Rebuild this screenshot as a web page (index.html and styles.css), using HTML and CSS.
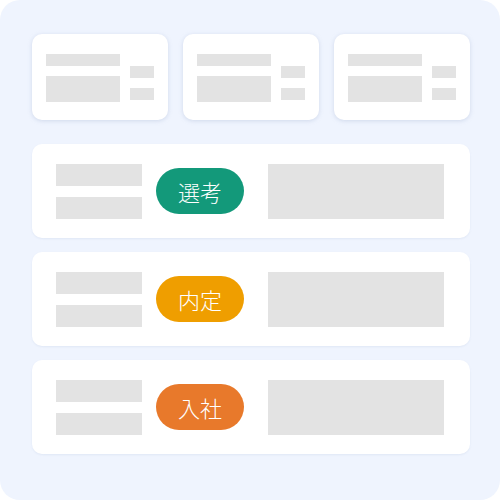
FILE: index.html
```html
<!DOCTYPE html>
<html lang="ja">
<head>
<meta charset="utf-8">
<link rel="stylesheet" href="styles.css">
</head>
<body>
<div class="board">
  <div class="stats">
    <div class="stat">
      <div class="col-main"><div class="bar b1"></div><div class="bar b2"></div></div>
      <div class="col-side"><div class="bar s"></div><div class="bar s"></div></div>
    </div>
    <div class="stat">
      <div class="col-main"><div class="bar b1"></div><div class="bar b2"></div></div>
      <div class="col-side"><div class="bar s"></div><div class="bar s"></div></div>
    </div>
    <div class="stat">
      <div class="col-main"><div class="bar b1"></div><div class="bar b2"></div></div>
      <div class="col-side"><div class="bar s"></div><div class="bar s"></div></div>
    </div>
  </div>
  <div class="rows">
    <div class="row">
      <div class="lines"><div class="bar l"></div><div class="bar l"></div></div>
      <span class="pill green">選考</span>
      <div class="bar block"></div>
    </div>
    <div class="row">
      <div class="lines"><div class="bar l"></div><div class="bar l"></div></div>
      <span class="pill yellow">内定</span>
      <div class="bar block"></div>
    </div>
    <div class="row">
      <div class="lines"><div class="bar l"></div><div class="bar l"></div></div>
      <span class="pill orange">入社</span>
      <div class="bar block"></div>
    </div>
  </div>
</div>
</body>
</html>
```
FILE: styles.css
```css
* { box-sizing: border-box; }
html, body { margin: 0; padding: 0; background: #ffffff; }
body { font-family: "Noto Sans CJK JP", "Noto Sans", sans-serif; }

.board {
  width: 500px;
  height: 500px;
  background: #eff4fe;
  border-radius: 20px;
  padding: 34px 30px 0 32px;
}

.stats {
  display: grid;
  grid-template-columns: 136px 136px 136px;
  column-gap: 15px;
}

.stat {
  height: 86px;
  background: #fff;
  border-radius: 10px;
  box-shadow: 0 1px 4px rgba(150, 165, 200, 0.35);
  padding: 20px 14px 0 14px;
  display: flex;
  gap: 10px;
  align-items: flex-start;
}

.bar { background: #e3e3e3; }

.col-main { display: flex; flex-direction: column; gap: 10px; }
.b1 { width: 74px; height: 12px; }
.b2 { width: 74px; height: 26px; }

.col-side { display: flex; flex-direction: column; gap: 10px; margin-top: 12px; }
.s { width: 24px; height: 12px; }

.rows {
  margin-top: 24px;
  display: flex;
  flex-direction: column;
  gap: 14px;
  width: 438px;
}

.row {
  height: 94px;
  background: #fff;
  border-radius: 10px;
  box-shadow: 0 1px 2px rgba(150, 165, 200, 0.15);
  padding-left: 24px;
  display: flex;
  align-items: center;
}

.lines { display: flex; flex-direction: column; gap: 11px; }
.l { width: 86px; height: 22px; }

.pill {
  margin-left: 14px;
  width: 88px;
  height: 46px;
  border-radius: 23px;
  color: #fff;
  font-size: 22px;
  font-weight: 300;
  line-height: 46px;
  text-align: center;
  letter-spacing: 0;
}
.green { background: #13997a; }
.yellow { background: #ef9e00; }
.orange { background: #e8792b; }

.block {
  margin-left: 24px;
  width: 176px;
  height: 55px;
}
```
